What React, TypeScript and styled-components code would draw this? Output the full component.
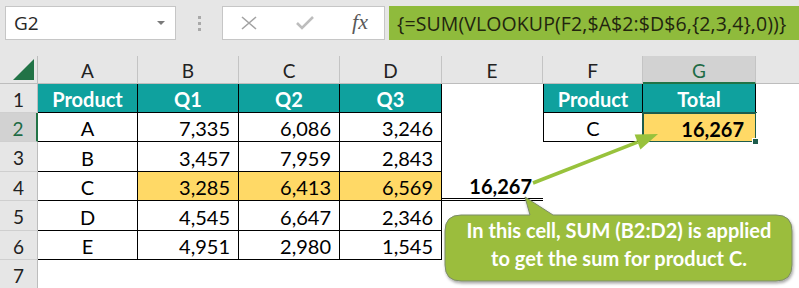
import React from 'react';
import styled, { createGlobalStyle, css } from 'styled-components';

const GlobalStyle = createGlobalStyle`
  html, body {
    margin: 0;
    padding: 0;
    background: #ffffff;
  }
  body {
    font-family: Lato, "Open Sans", sans-serif;
  }
`;

const CELL_FONT = `Lato, "Liberation Sans", sans-serif`;
const UI_FONT = `"Open Sans", "Noto Sans", sans-serif`;

// page frame
const Page = styled.div`
  position: relative;
  width: 799px;
  height: 288px;
  overflow: hidden;
  background: #ffffff;
`;

// formula bar
const Toolbar = styled.div`
  display: flex;
  align-items: flex-start;
  height: 56px;
  box-sizing: border-box;
  padding: 6px 0 0 5px;
  background: #e6e6e6;
`;

const NameBox = styled.div`
  display: flex;
  align-items: center;
  justify-content: space-between;
  width: 171px;
  height: 34px;
  box-sizing: border-box;
  padding: 0 10px 0 8px;
  background: #ffffff;
  border: 1px solid #c6c6c6;
  font-family: ${UI_FONT};
  font-size: 19px;
  color: #262626;
`;

const Caret = styled.span`
  width: 0;
  height: 0;
  border-left: 4px solid transparent;
  border-right: 4px solid transparent;
  border-top: 4px solid #7a7a7a;
`;

const Grip = styled.div`
  display: flex;
  flex-direction: column;
  align-items: center;
  justify-content: center;
  gap: 3px;
  width: 46px;
  height: 34px;

  span {
    width: 3px;
    height: 3px;
    background: #a9a9a9;
  }
`;

const FxBox = styled.div`
  display: flex;
  align-items: center;
  width: 163px;
  height: 34px;
  box-sizing: border-box;
  padding: 0 16px 0 17px;
  justify-content: space-between;
  background: #ffffff;
  border: 1px solid #c6c6c6;
`;

const FxLabel = styled.span`
  font-family: "Liberation Serif", "DejaVu Serif", serif;
  font-style: italic;
  font-size: 22px;
  color: #5a5a5a;
  padding-bottom: 2px;
`;

const Formula = styled.div`
  flex: 1;
  display: flex;
  align-items: center;
  height: 34px;
  margin-left: 4px;
  padding-left: 8px;
  background: #8fbb3c;
  font-family: ${UI_FONT};
  font-size: 19.5px;
  letter-spacing: 0.1px;
  color: #22250f;
  white-space: nowrap;
`;

// worksheet grid
const Sheet = styled.div`
  display: grid;
  grid-template-columns: 38px 100px 101px 101px 102px 101px 100px 113px 1fr;
  grid-template-rows: 28px 29px 29px 30px 29px 30px 29px 29px;
  font-family: ${CELL_FONT};
  font-size: 20px;
  color: #000000;
`;

type Kind = 'corner' | 'colhead' | 'rowhead' | 'plain' | 'teal' | 'yellow';

interface CellProps {
  $kind: Kind;
  $align?: 'left' | 'center' | 'right';
  $box?: boolean;
  $left?: boolean;
  $bold?: boolean;
  $double?: boolean;
  $active?: boolean;
  $selected?: boolean;
  $last?: boolean;
}

const Cell = styled.div<CellProps>`
  position: relative;
  display: flex;
  align-items: center;
  justify-content: ${p => (p.$align === 'right' ? 'flex-end' : p.$align === 'left' ? 'flex-start' : 'center')};
  box-sizing: border-box;
  padding: 2px 8px 0 8px;
  font-weight: ${p => (p.$bold ? 700 : 400)};
  white-space: nowrap;
  background: #ffffff;

  ${p => p.$kind === 'colhead' && css`
    background: ${p.$active ? '#d2d2d2' : '#e6e6e6'};
    color: ${p.$active ? '#1e6b45' : '#222222'};
    border-right: ${p.$last ? 'none' : '1px solid #c4c4c4'};
    border-bottom: ${p.$active ? '2px solid #217346' : '1px solid #bdbdbd'};
    font-size: 19px;
  `}

  ${p => p.$kind === 'rowhead' && css`
    background: ${p.$active ? '#d2d2d2' : '#e6e6e6'};
    color: ${p.$active ? '#1e6b45' : '#222222'};
    border-bottom: 1px solid #cfcfcf;
    border-right: ${p.$active ? '2px solid #217346' : '1px solid #bdbdbd'};
    font-size: 19px;
  `}

  ${p => p.$kind === 'corner' && css`
    background: #e6e6e6;
    border-right: 1px solid #bdbdbd;
    border-bottom: 1px solid #bdbdbd;
  `}

  ${p => p.$kind === 'teal' && css`
    background: #0fa19e;
    color: #ffffff;
    font-weight: 700;
    font-size: 20px;
  `}

  ${p => p.$kind === 'yellow' && css`
    background: #ffd966;
  `}

  ${p => p.$box && css`
    border-right: 1px solid #000000;
    border-bottom: 1px solid #000000;
  `}

  ${p => p.$left && css`
    border-left: 1px solid #000000;
  `}

  ${p => p.$double && css`
    border-bottom: 3px double #000000;
    padding-right: 11px;
  `}

  ${p => p.$selected && css`
    padding-right: 12px;
    &::after {
      content: '';
      position: absolute;
      inset: -1px -1px -1px -1px;
      border: 2px solid #1d5c4c;
    }
    &::before {
      content: '';
      position: absolute;
      right: -3px;
      bottom: -3px;
      width: 5px;
      height: 5px;
      background: #1d5c4c;
      border: 1px solid #ffffff;
      z-index: 1;
    }
  `}
`;

const SelectAll = styled.span`
  position: absolute;
  right: 3px;
  bottom: 3px;
  width: 0;
  height: 0;
  border-left: 21px solid transparent;
  border-bottom: 21px solid #217346;
`;

// overlay drawing (arrow) and callout
const Overlay = styled.svg`
  position: absolute;
  left: 0;
  top: 0;
  width: 799px;
  height: 288px;
  pointer-events: none;
`;

const Callout = styled.div`
  position: absolute;
  left: 444px;
  top: 196px;
  width: 350px;
  height: 88px;
`;

const CalloutShape = styled.svg`
  position: absolute;
  inset: 0;
  width: 100%;
  height: 100%;
  overflow: visible;
`;

const CalloutText = styled.div`
  position: relative;
  box-sizing: border-box;
  padding-top: 20px;
  text-align: center;
  font-family: ${CELL_FONT};
  font-weight: 700;
  font-size: 20px;
  line-height: 28px;
  color: #ffffff;
`;

type CellData = Partial<CellProps> & { text?: string };

type Row = {
  n: number;
  cells: CellData[];
};

const t = (text: string, extra: Partial<CellProps> = {}): CellData => ({ text, $kind: 'teal', $box: true, ...extra });
const c = (text: string, extra: Partial<CellProps> = {}): CellData => ({ text, $kind: 'plain', $box: true, $align: 'center', ...extra });
const num = (text: string, extra: Partial<CellProps> = {}): CellData => ({ text, $kind: 'plain', $box: true, $align: 'right', ...extra });
const blank = (): CellData => ({ text: '', $kind: 'plain' });

const rows: Row[] = [
  { n: 1, cells: [t('Product'), t('Q1'), t('Q2'), t('Q3'), blank(), t('Product', { $left: true }), t('Total'), blank()] },
  {
    n: 2,
    cells: [
      c('A'), num('7,335'), num('6,086'), num('3,246'), blank(),
      c('C', { $left: true }),
      num('16,267', { $kind: 'yellow', $bold: true, $selected: true, $box: false }),
      blank(),
    ],
  },
  { n: 3, cells: [c('B'), num('3,457'), num('7,959'), num('2,843'), blank(), blank(), blank(), blank()] },
  {
    n: 4,
    cells: [
      c('C'),
      num('3,285', { $kind: 'yellow' }), num('6,413', { $kind: 'yellow' }), num('6,569', { $kind: 'yellow' }),
      { text: '16,267', $kind: 'plain', $align: 'right', $bold: true, $double: true },
      blank(), blank(), blank(),
    ],
  },
  { n: 5, cells: [c('D'), num('4,545'), num('6,647'), num('2,346'), blank(), blank(), blank(), blank()] },
  { n: 6, cells: [c('E'), num('4,951'), num('2,980'), num('1,545'), blank(), blank(), blank(), blank()] },
  { n: 7, cells: [blank(), blank(), blank(), blank(), blank(), blank(), blank(), blank()] },
];

const columns = ['A', 'B', 'C', 'D', 'E', 'F', 'G', ''];

const CrossIcon = () => (
  <svg width="18" height="14" viewBox="0 0 18 14">
    <path d="M2 1 L16 13 M16 1 L2 13" stroke="#a3a3a3" strokeWidth="1.6" fill="none" />
  </svg>
);

const CheckIcon = () => (
  <svg width="20" height="14" viewBox="0 0 20 14">
    <path d="M2 7 L7 12 L18 1" stroke="#bdbdbd" strokeWidth="2.6" fill="none" />
  </svg>
);

const App: React.FC = () => {
  // arrow geometry
  const from = { x: 533, y: 183 };
  const tip = { x: 658, y: 134 };
  const dx = tip.x - from.x;
  const dy = tip.y - from.y;
  const len = Math.hypot(dx, dy);
  const ux = dx / len;
  const uy = dy / len;
  const head = 22;
  const half = 8;
  const bx = tip.x - ux * head;
  const by = tip.y - uy * head;
  const headPts = `${tip.x},${tip.y} ${bx - uy * half},${by + ux * half} ${bx + uy * half},${by - ux * half}`;

  return (
    <Page>
      <GlobalStyle />
      <Toolbar>
        <NameBox>
          <span>G2</span>
          <Caret />
        </NameBox>
        <Grip>
          <span />
          <span />
          <span />
        </Grip>
        <FxBox>
          <CrossIcon />
          <CheckIcon />
          <FxLabel>fx</FxLabel>
        </FxBox>
        <Formula>{'{=SUM(VLOOKUP(F2,$A$2:$D$6,{2,3,4},0))}'}</Formula>
      </Toolbar>

      <Sheet>
        <Cell $kind="corner">
          <SelectAll />
        </Cell>
        {columns.map((col, i) => (
          <Cell key={`h${i}`} $kind="colhead" $active={col === 'G'} $last={i === columns.length - 1}>
            {col}
          </Cell>
        ))}
        {rows.map(row => (
          <React.Fragment key={row.n}>
            <Cell $kind="rowhead" $active={row.n === 2}>
              {row.n}
            </Cell>
            {row.cells.map((cell, i) => {
              const { text, ...rest } = cell;
              return (
                <Cell key={i} $kind={rest.$kind ?? 'plain'} {...rest}>
                  {text}
                </Cell>
              );
            })}
          </React.Fragment>
        ))}
      </Sheet>

      <Overlay viewBox="0 0 799 288">
        <line x1={from.x} y1={from.y} x2={bx} y2={by} stroke="#98c23c" strokeWidth="3.5" />
        <polygon points={headPts} fill="#98c23c" />
      </Overlay>

      <Callout>
        <CalloutShape viewBox="0 0 350 88">
          <defs>
            <filter id="sh" x="-10%" y="-10%" width="120%" height="130%">
              <feDropShadow dx="1" dy="2" stdDeviation="1.5" floodColor="#000" floodOpacity="0.35" />
            </filter>
          </defs>
          <path
            d="M17 19 H86 L81 1 L109 19 H332 Q348 19 348 35 V69 Q348 85 332 85 H17 Q1 85 1 69 V35 Q1 19 17 19 Z"
            fill="#9bbd3c"
            stroke="#7d8c6a"
            strokeWidth="1"
            filter="url(#sh)"
          />
        </CalloutShape>
        <CalloutText>
          In this cell, SUM (B2:D2) is applied
          <br />
          to get the sum for product C.
        </CalloutText>
      </Callout>
    </Page>
  );
};

export default App;
